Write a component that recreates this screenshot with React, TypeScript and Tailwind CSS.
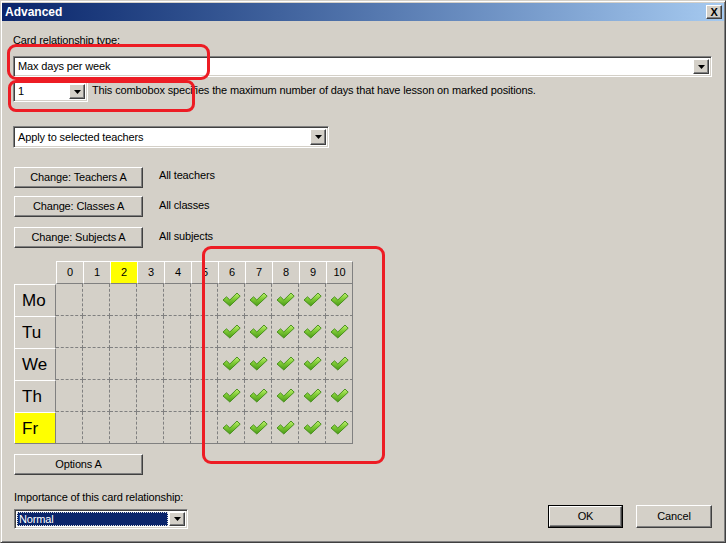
import React from "react";

const sunken =
  "border border-t-[#808080] border-l-[#808080] border-b-white border-r-white shadow-[inset_1px_1px_0_#404040,inset_-1px_-1px_0_#d4d0c8]";

const raised =
  "border border-t-white border-l-white border-b-[#404040] border-r-[#404040] shadow-[inset_-1px_-1px_0_#808080,inset_1px_1px_0_#d4d0c8]";

function DropButton() {
  return (
    <div
      className={`flex h-full w-[16px] shrink-0 items-center justify-center bg-[#d4d0c8] ${raised}`}
    >
      <svg width="7" height="4" viewBox="0 0 7 4">
        <path d="M0 0h7L3.5 4z" fill="#000" />
      </svg>
    </div>
  );
}

function Combo({
  value,
  width,
  height = "h-[21px]",
  selected = false,
}: {
  value: string;
  width: string;
  height?: string;
  selected?: boolean;
}) {
  return (
    <div className={`${width} ${height} flex bg-white p-[2px] ${sunken}`}>
      <div className="flex min-w-0 flex-1 items-center pr-px">
        {selected ? (
          <div className="flex h-full w-full items-center border border-dotted border-[#e0e0e0] bg-[#0a246a] pl-[1px] text-white">
            {value}
          </div>
        ) : (
          <div className="pl-[2px]">{value}</div>
        )}
      </div>
      <DropButton />
    </div>
  );
}

function Button({
  label,
  width,
  height = "h-[21px]",
  def = false,
}: {
  label: string;
  width: string;
  height?: string;
  def?: boolean;
}) {
  const inner = (
    <div
      className={`flex h-full w-full items-center justify-center bg-[#d4d0c8] ${raised}`}
    >
      {label}
    </div>
  );
  if (def) {
    return (
      <div className={`${width} ${height} border border-black`}>{inner}</div>
    );
  }
  return <div className={`${width} ${height}`}>{inner}</div>;
}

function Check() {
  return (
    <svg width="19" height="15" viewBox="0 0 19 15">
      <defs>
        <linearGradient id="chk" x1="0" y1="0" x2="0" y2="1">
          <stop offset="0" stopColor="#c0f070" />
          <stop offset="0.45" stopColor="#80cc36" />
          <stop offset="1" stopColor="#4a9a18" />
        </linearGradient>
      </defs>
      <path
        d="M1 8 L4.5 4.8 L7.8 8 L15 1 L18.2 4.2 L7.8 14 Z"
        fill="url(#chk)"
        stroke="#3f8a14"
        strokeWidth="0.9"
        strokeLinejoin="round"
      />
    </svg>
  );
}

const days = ["Mo", "Tu", "We", "Th", "Fr"];
const cols = [0, 1, 2, 3, 4, 5, 6, 7, 8, 9, 10];

function Grid() {
  return (
    <div className="grid grid-cols-[42px_repeat(11,27px)] grid-rows-[23px_repeat(5,32px)] font-['Liberation_Sans',Arial,sans-serif] tracking-normal">
      <div />
      {cols.map((c) => (
        <div
          key={c}
          className={`flex items-center justify-center border-t border-l border-b border-t-white border-l-white border-b-[#808080] text-[11px] ${
            c === 2 ? "bg-[#ffff00]" : ""
          } ${c === 10 ? "border-r border-r-[#808080]" : ""}`}
        >
          {c}
        </div>
      ))}
      {days.map((d, r) => (
        <React.Fragment key={d}>
          <div
            className={`flex items-center border-t border-l border-r border-t-white border-l-white border-r-[#808080] pl-[7px] text-[17px] ${
              d === "Fr" ? "bg-[#ffff00]" : ""
            } ${r === 4 ? "border-b border-b-[#808080]" : ""}`}
          >
            {d}
          </div>
          {cols.map((c) => (
            <div
              key={c}
              className={`flex items-center justify-center border-r border-b border-dashed border-[#808080] ${
                c === 10 ? "[border-right-style:solid]" : ""
              } ${r === 4 ? "[border-bottom-style:solid]" : ""}`}
            >
              {c >= 6 ? <Check /> : null}
            </div>
          ))}
        </React.Fragment>
      ))}
    </div>
  );
}

export default function App() {
  return (
    <div className="relative h-[543px] w-[726px] overflow-hidden border border-t-[#d4d0c8] border-l-[#d4d0c8] border-r-[#404040] border-b-[#404040] bg-[#d4d0c8] p-px pt-[2px] font-['Liberation_Sans',Tahoma,sans-serif] text-[11px] leading-[13px] tracking-[-0.14px] text-black shadow-[inset_1px_1px_0_#fff,inset_-1px_-1px_0_#808080]">
      {/* title bar */}
      <div className="flex h-[18px] items-center justify-between bg-gradient-to-r from-[#0a246a] to-[#a6caf0] pl-[3px] pr-[2px]">
        <span className="text-[12px] font-bold tracking-normal text-white">
          Advanced
        </span>
        <div
          className={`flex h-[14px] w-[16px] items-center justify-center bg-[#d4d0c8] text-[11px] font-bold leading-none ${raised}`}
        >
          X
        </div>
      </div>

      <div className="flex flex-col pl-[11px] pr-[12px]">
        <div className="mt-[13px]">Card relationship type:</div>

        <div className="mt-[9px]">
          <Combo value="Max days per week" width="w-[699px]" />
        </div>

        <div className="mt-[4px] flex items-center">
          <Combo value="1" width="w-[75px]" />
          <span className="ml-[4px] -mt-[3px]">
            This combobox specifies the maximum number of days that have lesson
            on marked positions.
          </span>
        </div>

        <div className="mt-[24px]">
          <Combo
            value="Apply to selected teachers"
            width="w-[316px]"
            height="h-[22px]"
          />
        </div>

        <div className="ml-px mt-[19px] flex items-start">
          <Button label="Change: Teachers A" width="w-[129px]" />
          <span className="ml-[16px] mt-[2px]">All teachers</span>
        </div>
        <div className="ml-px mt-[8px] flex items-start">
          <Button label="Change: Classes A" width="w-[129px]" />
          <span className="ml-[16px] mt-[3px]">All classes</span>
        </div>
        <div className="ml-px mt-[10px] flex items-start">
          <Button label="Change: Subjects A" width="w-[129px]" />
          <span className="ml-[16px] mt-[3px]">All subjects</span>
        </div>

        <div className="ml-px mt-[13px]">
          <Grid />
        </div>

        <div className="ml-px mt-[10px]">
          <Button label="Options A" width="w-[129px]" />
        </div>

        <div className="flex items-end justify-between">
          <div className="ml-px flex flex-col">
            <div className="mt-[16px]">Importance of this card relationship:</div>
            <div className="mt-[5px]">
              <Combo
                value="Normal"
                width="w-[174px]"
                height="h-[20px]"
                selected
              />
            </div>
          </div>
          <div className="mb-[1px] flex gap-[13px]">
            <Button label="OK" width="w-[75px]" height="h-[23px]" def />
            <Button label="Cancel" width="w-[76px]" height="h-[23px]" />
          </div>
        </div>
      </div>

      {/* red annotation marks */}
      <div className="pointer-events-none absolute left-[6px] top-[43px] h-[36px] w-[203px] rounded-[9px] border-[3px] border-[#ed1c24]" />
      <div className="pointer-events-none absolute left-[7px] top-[79px] h-[32px] w-[187px] rounded-[8px] border-[3px] border-[#ed1c24]" />
      <div className="pointer-events-none absolute left-[201px] top-[245px] h-[218px] w-[183px] rounded-[9px] border-[3px] border-[#ed1c24]" />
    </div>
  );
}
